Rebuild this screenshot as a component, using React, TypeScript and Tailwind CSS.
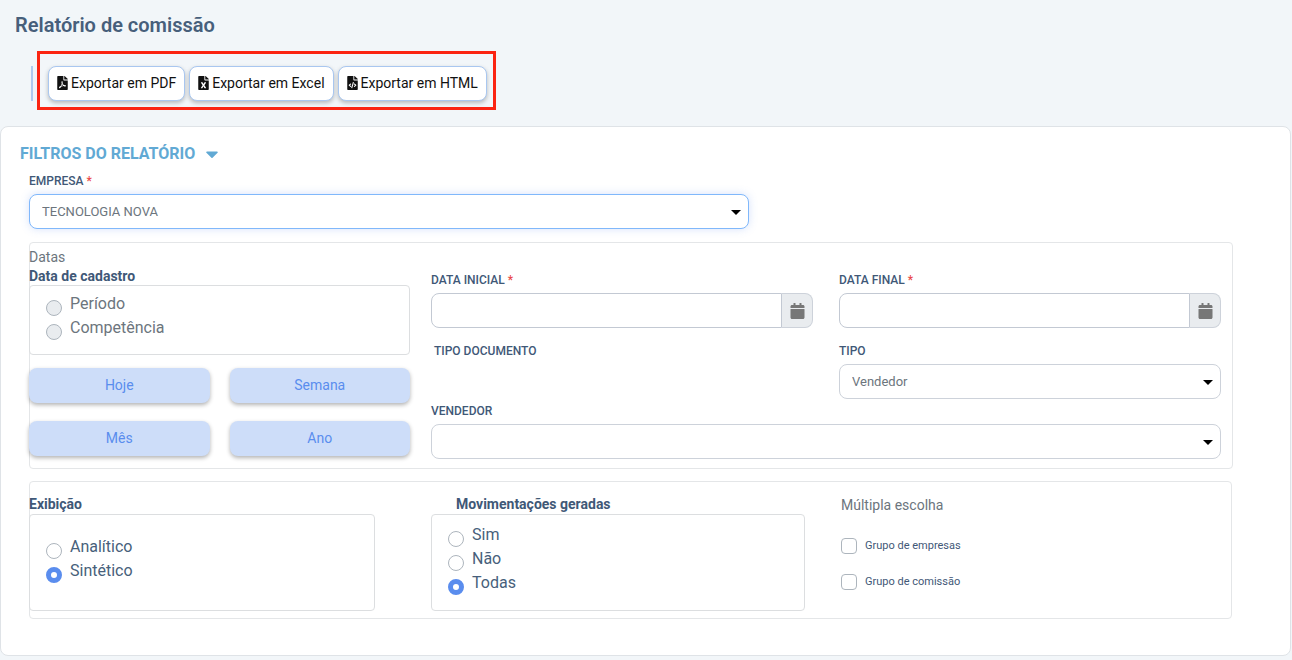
import React, { useState } from 'react';
import { FaCalendar, FaCaretDown, FaFileCode, FaFileExcel, FaFilePdf } from 'react-icons/fa';

const exportButtons = [
  { label: 'Exportar em PDF', icon: FaFilePdf },
  { label: 'Exportar em Excel', icon: FaFileExcel },
  { label: 'Exportar em HTML', icon: FaFileCode },
];

const quickRanges = ['Hoje', 'Semana', 'Mês', 'Ano'];

interface FieldLabelProps {
  htmlFor: string;
  required?: boolean;
  children: React.ReactNode;
}

const FieldLabel: React.FC<FieldLabelProps> = ({ htmlFor, required, children }) => (
  <label htmlFor={htmlFor} className="block mb-[5px] text-xs leading-4 font-medium uppercase text-[#3f5877]">
    {children}
    {required && <span className="text-[#ea4a4a]"> *</span>}
  </label>
);

interface SelectFieldProps {
  id: string;
  options: string[];
  highlighted?: boolean;
}

const SelectField: React.FC<SelectFieldProps> = ({ id, options, highlighted }) => (
  <div className="relative">
    <select
      id={id}
      className={`block w-full h-[35px] appearance-none rounded-lg border bg-white pl-3 pr-8 text-[13px] text-[#6c757d] outline-none ${
        highlighted
          ? 'border-[#80b8fb] shadow-[0_0_8px_rgba(90,141,238,0.25)]'
          : 'border-[#cdd2da]'
      }`}
    >
      {options.map((option) => (
        <option key={option}>{option}</option>
      ))}
    </select>
    <svg className="absolute right-2 top-4 w-[10px] h-[5px] pointer-events-none" viewBox="0 0 10 5">
      <path d="M0 0h10L5 5z" fill="#000" />
    </svg>
  </div>
);

interface DateFieldProps {
  id: string;
  label: string;
}

const DateField: React.FC<DateFieldProps> = ({ id, label }) => (
  <div>
    <FieldLabel htmlFor={id} required>{label}</FieldLabel>
    <div className="flex h-[35px]">
      <input
        id={id}
        type="text"
        className="flex-1 min-w-0 rounded-l-lg border border-[#c3c9d3] bg-white px-3 text-[13px] text-[#6c757d] outline-none"
      />
      <button
        type="button"
        aria-label={`Abrir calendário: ${label}`}
        className="flex items-center justify-center w-[31px] rounded-r-lg border border-l-0 border-[#cdd2da] bg-[#e9ecef]"
      >
        <FaCalendar className="w-[15px] h-4 text-[#777]" />
      </button>
    </div>
  </div>
);

interface RadioOptionsProps {
  name: string;
  options: string[];
  initial?: string;
  disabled?: boolean;
}

const RadioOptions: React.FC<RadioOptionsProps> = ({ name, options, initial, disabled }) => {
  const [selected, setSelected] = useState(initial);

  return (
    <>
      {options.map((option) => (
        <label
          key={option}
          className={`flex gap-2 h-6 text-base leading-6 ${disabled ? 'text-[#6c757d]' : 'text-[#475f7b]'}`}
        >
          <input
            type="radio"
            name={name}
            checked={selected === option}
            onChange={() => setSelected(option)}
            disabled={disabled}
            className="mt-2 w-4 h-4 shrink-0 appearance-none rounded-full border border-[#adb5bd] bg-white disabled:bg-[#e9ecef] checked:border-[5px] checked:border-[#5a8dee]"
          />
          {option}
        </label>
      ))}
    </>
  );
};

const App: React.FC = () => {
  return (
    <div className="min-h-screen bg-[#f2f6f9] pt-3 pb-1 font-[Roboto,sans-serif] text-[#475f7b]">
      {/* Header */}
      <h1 className="pl-[15px] text-xl leading-[26px] font-semibold text-[#475f7b]">Relatório de comissão</h1>
      <div className="flex items-start mt-[13px] pl-[31px]">
        <div className="w-[2px] h-[35px] mt-[15px] bg-[#aecbf0]"></div>
        <div className="flex flex-wrap gap-1 ml-1 border-[3px] border-[#fb2412] pt-3 pb-[6px] pl-2 pr-[6px]">
          {exportButtons.map(({ label, icon: Icon }) => (
            <button
              key={label}
              type="button"
              className="flex items-center gap-[3px] h-[35px] rounded-lg border border-[#a9c7f0] bg-white px-2 pb-[2px] text-sm text-[#111] shadow-[0_2px_4px_rgba(0,0,0,0.25)]"
            >
              <Icon className="w-[11px] h-[14px]" />
              {label}
            </button>
          ))}
        </div>
      </div>

      {/* Filters */}
      <main className="mt-4 mr-px rounded-lg border border-[#dfe3e7] bg-white pt-[15px] pb-9 pl-7 pr-[57px]">
        <h2 className="-ml-[9px] text-base leading-6 font-bold uppercase text-[#61a9d4]">
          <button type="button" className="flex items-center gap-[10px] uppercase">
            Filtros do relatório
            <FaCaretDown className="w-[14px] h-5" />
          </button>
        </h2>

        <div className="mt-[7px] max-w-[720px]">
          <FieldLabel htmlFor="empresa" required>Empresa</FieldLabel>
          <SelectField id="empresa" options={['TECNOLOGIA NOVA']} highlighted />
        </div>

        {/* Dates */}
        <section className="mt-[13px] rounded border border-[#e4e6e8] pr-[11px] pb-[9px]">
          <div className="grid grid-cols-[381fr_790fr] gap-[21px] -ml-px">
            <div>
              <h3 className="pt-1 text-sm leading-5 text-[#6c757d]">Datas</h3>
              <h4 id="cadastro" className="pt-px text-sm leading-[17px] font-bold text-[#3f5877]">Data de cadastro</h4>
              <div
                role="radiogroup"
                aria-labelledby="cadastro"
                className="rounded border border-[#dcdee0] pt-[6px] pb-[14px] pl-4"
              >
                <RadioOptions name="cadastro" options={['Período', 'Competência']} disabled />
              </div>
              <div className="grid grid-cols-2 gap-x-5 gap-y-[18px] mt-[13px]">
                {quickRanges.map((range) => (
                  <button
                    key={range}
                    type="button"
                    className="h-[35px] rounded-lg bg-[#cdddf9] pb-[2px] text-sm text-[#5a8dee] shadow-[0_2px_4px_rgba(0,0,0,0.3)]"
                  >
                    {range}
                  </button>
                ))}
              </div>
            </div>

            <div className="grid grid-cols-2 content-start gap-x-[26px] pt-[29px]">
              <DateField id="data-inicial" label="Data inicial" />
              <DateField id="data-final" label="Data final" />
              <div className="mt-[15px] pl-[3px] text-xs leading-4 font-medium uppercase text-[#3f5877]">
                Tipo documento
              </div>
              <div className="mt-[15px]">
                <FieldLabel htmlFor="tipo">Tipo</FieldLabel>
                <SelectField id="tipo" options={['Vendedor']} />
              </div>
              <div className="col-span-2 mt-1">
                <FieldLabel htmlFor="vendedor">Vendedor</FieldLabel>
                <SelectField id="vendedor" options={['']} />
              </div>
            </div>
          </div>
        </section>

        {/* Display options */}
        <section className="mt-3 mr-px rounded border border-[#e4e6e8] pt-3 pb-[7px]">
          <div className="grid grid-cols-[402fr_410fr_390fr] -ml-px">
            <div className="pr-14">
              <h4 id="exibicao" className="text-sm leading-5 font-bold text-[#3f5877]">Exibição</h4>
              <div
                role="radiogroup"
                aria-labelledby="exibicao"
                className="rounded border border-[#dcdee0] pt-5 pb-[27px] pl-4"
              >
                <RadioOptions name="exibicao" options={['Analítico', 'Sintético']} initial="Sintético" />
              </div>
            </div>

            <div className="pr-9">
              <h4 id="movimentacoes" className="pl-[25px] text-sm leading-5 font-bold text-[#3f5877]">
                Movimentações geradas
              </h4>
              <div
                role="radiogroup"
                aria-labelledby="movimentacoes"
                className="rounded border border-[#dcdee0] pt-2 pb-[15px] pl-4"
              >
                <RadioOptions name="movimentacoes" options={['Sim', 'Não', 'Todas']} initial="Todas" />
              </div>
            </div>

            <div>
              <h4 className="text-sm leading-[22px] text-[#6c757d]">Múltipla escolha</h4>
              <div className="flex flex-col gap-5 mt-[22px]">
                {['Grupo de empresas', 'Grupo de comissão'].map((option) => (
                  <label key={option} className="flex gap-2 text-[11px] leading-4 text-[#3f5877]">
                    <input
                      type="checkbox"
                      className="w-4 h-4 shrink-0 appearance-none rounded border border-[#adb5bd] bg-white checked:bg-[#5a8dee]"
                    />
                    {option}
                  </label>
                ))}
              </div>
            </div>
          </div>
        </section>
      </main>
    </div>
  );
};

export default App;
